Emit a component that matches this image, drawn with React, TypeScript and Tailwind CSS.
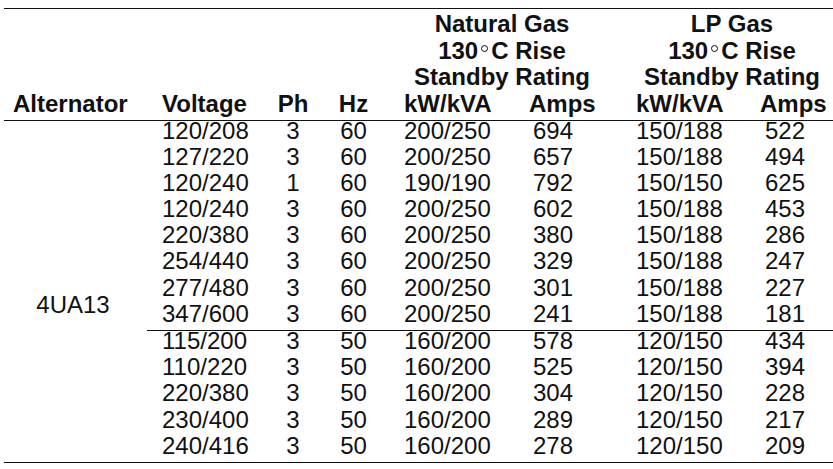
const rows60 = [
  ["120/208", "3", "60", "200/250", "694", "150/188", "522"],
  ["127/220", "3", "60", "200/250", "657", "150/188", "494"],
  ["120/240", "1", "60", "190/190", "792", "150/150", "625"],
  ["120/240", "3", "60", "200/250", "602", "150/188", "453"],
  ["220/380", "3", "60", "200/250", "380", "150/188", "286"],
  ["254/440", "3", "60", "200/250", "329", "150/188", "247"],
  ["277/480", "3", "60", "200/250", "301", "150/188", "227"],
  ["347/600", "3", "60", "200/250", "241", "150/188", "181"],
];

const rows50 = [
  ["115/200", "3", "50", "160/200", "578", "120/150", "434"],
  ["110/220", "3", "50", "160/200", "525", "120/150", "394"],
  ["220/380", "3", "50", "160/200", "304", "120/150", "228"],
  ["230/400", "3", "50", "160/200", "289", "120/150", "217"],
  ["240/416", "3", "50", "160/200", "278", "120/150", "209"],
];

// padding / alignment per data column (Voltage .. LP Amps)
const cellCls = [
  "pl-[15px]",
  "text-center",
  "text-center",
  "pl-[20px]",
  "pl-[17px]",
  "pl-[26px]",
  "pl-[19px]",
];

function DataRow({ row }: { row: string[] }) {
  return (
    <div className="grid h-[26.2px] grid-cols-[116px_60px_61px_132px_94px_136px_87px] leading-[20px]">
      {row.map((v, i) => (
        <div key={i} className={cellCls[i]}>
          {v}
        </div>
      ))}
    </div>
  );
}

function GroupHead({ title, pad }: { title: string; pad: string }) {
  return (
    <div className={`col-span-2 flex flex-col items-center ${pad}`}>
      <span>{title}</span>
      <span>
        130
        <span
          aria-label="°"
          className="relative -top-[7px] mx-[3px] inline-block h-[7px] w-[7px] rounded-full border-[1.2px] border-[#111]"
        />
        C Rise
      </span>
      <span>Standby Rating</span>
    </div>
  );
}

export default function App() {
  return (
    <div className="min-h-screen bg-white pt-[8px] font-['Liberation_Sans',Arial,sans-serif] text-[24px] text-[#111]">
      <div className="ml-[4px] w-[829px] border-y-[1.5px] border-[#111]">
        {/* Header */}
        <div className="grid grid-cols-[143px_116px_60px_61px_132px_94px_136px_87px] border-b-[1.5px] border-[#111] pt-[2px] pb-[2.5px] font-bold leading-[26.5px]">
          <div className="col-span-4" />
          <GroupHead title="Natural Gas" pad="pl-[10px]" />
          <GroupHead title="LP Gas" pad="pl-[21px]" />
          <div className="pl-[9px]">Alternator</div>
          <div className="pl-[15px]">Voltage</div>
          <div className="text-center">Ph</div>
          <div className="text-center">Hz</div>
          <div className="pl-[20px]">kW/kVA</div>
          <div className="pl-[13px]">Amps</div>
          <div className="pl-[26px]">kW/kVA</div>
          <div className="pl-[14px]">Amps</div>
        </div>

        {/* Body */}
        <div className="flex">
          <div className="flex w-[143px] items-center justify-center pr-[5px] pt-[28px] leading-[22px]">
            4UA13
          </div>
          <div className="flex-1">
            <div className="border-b-[1.5px] border-[#111]">
              {rows60.map((r, i) => (
                <DataRow key={i} row={r} />
              ))}
            </div>
            <div>
              {rows50.map((r, i) => (
                <DataRow key={i} row={r} />
              ))}
            </div>
          </div>
        </div>
      </div>
    </div>
  );
}
